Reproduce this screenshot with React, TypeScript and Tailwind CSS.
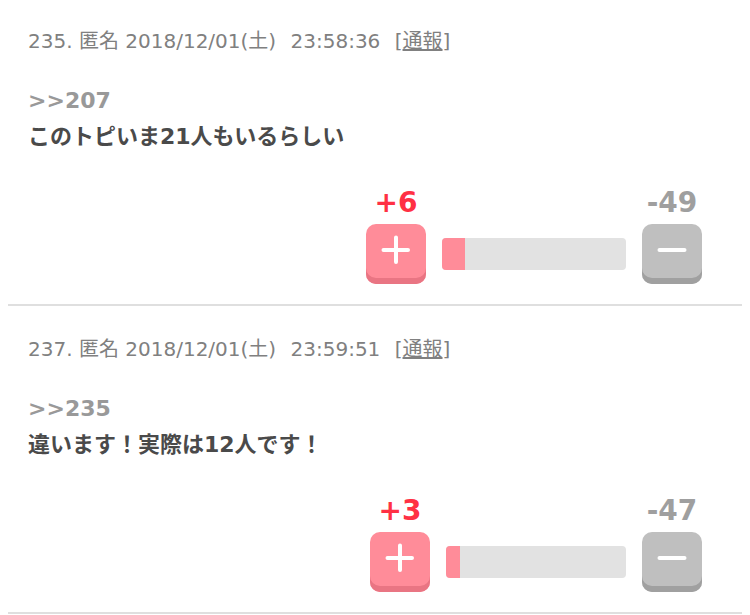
type Comment = {
  id: number;
  date: string;
  time: string;
  replyTo: number;
  body: string;
  plus: number;
  minus: number;
  barWidth: number;
};

const comments: Comment[] = [
  { id: 235, date: "2018/12/01(土)", time: "23:58:36", replyTo: 207, body: "このトピいま21人もいるらしい", plus: 6, minus: 49, barWidth: 184 },
  { id: 237, date: "2018/12/01(土)", time: "23:59:51", replyTo: 235, body: "違います！実際は12人です！", plus: 3, minus: 47, barWidth: 180 },
];

function VoteIcon({ plus }: { plus?: boolean }) {
  return (
    <svg viewBox="0 0 32 32" className="h-8 w-8" fill="none" stroke="white" strokeWidth="4" strokeLinecap="round" aria-hidden="true">
      <path d={plus ? "M3.5 16h24.5M16 3.5v24.5" : "M3.5 16h25"} />
    </svg>
  );
}

function VoteBar({ plus, minus, barWidth }: { plus: number; minus: number; barWidth: number }) {
  const ratio = (plus / (plus + minus)) * 100;
  return (
    <div className="flex items-end justify-end">
      <div className="flex flex-col items-center">
        <span className="text-[28px] leading-[38px] font-bold text-[#ff3044]">+{plus}</span>
        <button type="button" aria-label="プラス" className="mt-0.5 flex h-[60px] w-[60px] justify-center rounded-[10px] bg-[#ff8c99] pt-[10px] shadow-[inset_0_-6px_0_#e97583]">
          <VoteIcon plus />
        </button>
      </div>
      <div className="mx-4 mb-[14px] flex h-8 overflow-hidden rounded bg-[#e2e2e2] pr-1" style={{ width: barWidth }}>
        <div className="w-1 shrink-0 bg-[#ff8c99]" />
        <div className="flex-1">
          <div className="h-full bg-[#ff8c99]" style={{ width: `${ratio}%` }} />
        </div>
      </div>
      <div className="flex flex-col items-center">
        <span className="text-[28px] leading-[38px] font-bold text-[#9f9f9f]">-{minus}</span>
        <button type="button" aria-label="マイナス" className="mt-0.5 flex h-[60px] w-[60px] justify-center rounded-[10px] bg-[#bfbfbf] pt-[10px] shadow-[inset_0_-6px_0_#a0a0a0]">
          <VoteIcon />
        </button>
      </div>
    </div>
  );
}

function CommentItem({ comment }: { comment: Comment }) {
  return (
    <li className="border-b-2 border-[#dfdfdf] px-5 pt-[27px] pb-5 first:pt-[25px]">
      <p className="text-[20px] leading-8 text-[#808080]">
        {comment.id}. 匿名 {comment.date} <span className="ml-2">{comment.time}</span>{" "}
        <span className="ml-2">
          [<a href="#report" className="underline">通報</a>]
        </span>
      </p>
      <div className="mt-[26px] text-[22px] leading-9 font-bold text-[#4a4a4a]">
        <a href={`#comment${comment.replyTo}`} className="text-[#999]">&gt;&gt;{comment.replyTo}</a>
        <p>{comment.body}</p>
      </div>
      <div className="mt-[29px] pr-5">
        <VoteBar plus={comment.plus} minus={comment.minus} barWidth={comment.barWidth} />
      </div>
    </li>
  );
}

export default function App() {
  return (
    <main lang="ja" className="bg-white px-2 font-['DejaVu_Sans','Noto_Sans_CJK_JP',sans-serif]">
      <ul>
        {comments.map((comment) => (
          <CommentItem key={comment.id} comment={comment} />
        ))}
      </ul>
    </main>
  );
}
